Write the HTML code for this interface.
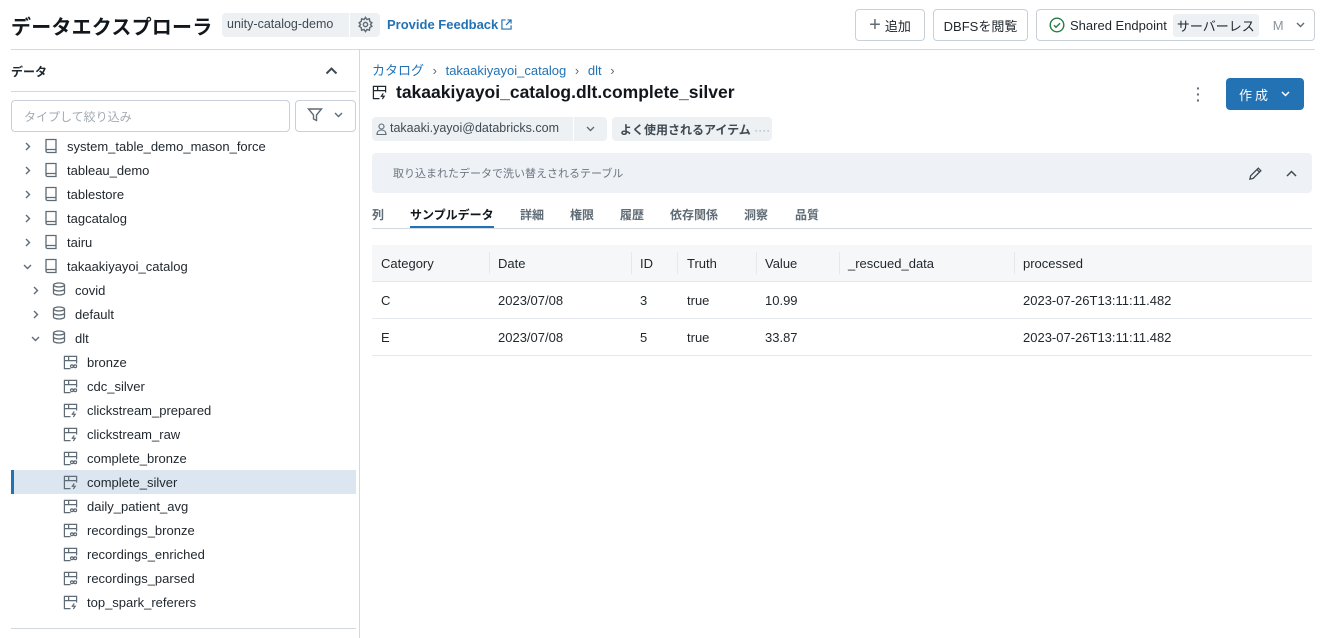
<!DOCTYPE html>
<html><head><meta charset="utf-8"><style>
*{box-sizing:border-box;margin:0;padding:0}
body{width:1322px;height:638px;overflow:hidden;background:#fff;font-family:"Liberation Sans","Noto Sans CJK JP",sans-serif;color:#1f272d;position:relative;font-size:13px}
.a{position:absolute;white-space:nowrap}
.btn{position:absolute;border:1px solid #c8d1d9;border-radius:4px;height:32px;top:9px;display:flex;align-items:center;font-size:13px;color:#1f272d}
.tab{position:absolute;top:206px;font-size:12px;font-weight:bold;color:#5f6b75}
.th{position:absolute;top:256px;font-size:13px;color:#1f272d}
.td{position:absolute;font-size:13px;color:#1f272d}
</style></head><body>
<div class="a" style="left:11px;top:11px;font-size:20px;font-weight:bold;color:#11171c;letter-spacing:0.2px">データエクスプローラ</div>
<div class="a" style="left:222px;top:13px;width:127px;height:24px;background:#eef1f4;border-radius:4px 0 0 4px;"></div>
<div class="a" style="left:227px;top:17px;font-size:12.5px;color:#3f4a53">unity-catalog-demo</div>
<div class="a" style="left:350px;top:13px;width:30px;height:24px;background:#eef1f4;border-radius:0 4px 4px 0"></div>
<svg class="a" style="left:357px;top:16px" width="17" height="17" viewBox="0 0 24 24" fill="none" stroke="#5f6b75" stroke-width="2"><circle cx="12" cy="12" r="3"/><path d="M12 2l2 3 3.5-1 .5 3.5 3 2-2 2.5 2 2.5-3 2-.5 3.5-3.5-1-2 3-2-3-3.5 1-.5-3.5-3-2 2-2.5-2-2.5 3-2 .5-3.5 3.5 1z"/></svg>
<div class="a" style="left:387px;top:17px;font-size:13px;font-weight:bold;color:#2272b4">Provide Feedback</div>
<svg class="a" style="left:501px;top:19px" width="11" height="11" viewBox="0 0 12 12" fill="none" stroke="#2272b4" stroke-width="1.3"><path d="M5 1H1v10h10V7M7 1h4v4M11 1L5.5 6.5"/></svg>

<div class="btn" style="left:855px;width:70px;justify-content:center"><span style="font-size:20px;color:#5f6b75;margin-right:4px;font-weight:300">+</span>追加</div>
<div class="btn" style="left:933px;width:95px;justify-content:center">DBFSを閲覧</div>
<div class="btn" style="left:1036px;width:279px;padding-left:12px">
<svg width="16" height="16" viewBox="0 0 16 16" fill="none" stroke="#277c43" stroke-width="1.4"><circle cx="8" cy="8" r="6.8"/><path d="M5 8.2l2 2 4-4"/></svg>
<span style="margin-left:5px">Shared Endpoint</span><span style="margin-left:6px;background:#eef1f4;padding:2px 4px;border-radius:3px">サーバーレス</span><span style="margin-left:14px;color:#8a949c">M</span>
<svg style="margin-left:12px" width="9" height="6" viewBox="0 0 9 6" fill="none" stroke="#5f6b75" stroke-width="1.4"><path d="M1 1l3.5 3.5L8 1"/></svg></div>

<div class="a" style="left:11px;top:49px;width:1304px;height:1px;background:#d1d9e1"></div>
<div class="a" style="left:359px;top:50px;width:1px;height:588px;background:#d1d9e1"></div>

<div class="a" style="left:11px;top:63px;font-size:12px;font-weight:bold">データ</div>
<svg class="a" style="left:325px;top:66px" width="13" height="9" viewBox="0 0 13 9" fill="none" stroke="#3f4a53" stroke-width="2"><path d="M1.5 7.5l5-5 5 5"/></svg>
<div class="a" style="left:11px;top:91px;width:345px;height:1px;background:#d1d9e1"></div>
<div class="a" style="left:11px;top:100px;width:279px;height:32px;border:1px solid #c8d1d9;border-radius:4px;"></div>
<div class="a" style="left:24px;top:108px;font-size:12px;color:#a2abb3">タイプして絞り込み</div>
<div class="a" style="left:295px;top:100px;width:61px;height:32px;border:1px solid #c8d1d9;border-radius:4px;"></div>
<svg class="a" style="left:307px;top:107px" width="16" height="16" viewBox="0 0 16 16" fill="none" stroke="#5f6b75" stroke-width="1.4"><path d="M1.5 2h13L9.5 8v5.5l-3-1.5V8z"/></svg>
<svg class="a" style="left:334px;top:112px" width="9" height="6" viewBox="0 0 9 6" fill="none" stroke="#5f6b75" stroke-width="1.4"><path d="M1 1l3.5 3.5L8 1"/></svg>

<div class="a" style="left:11px;top:470px;width:345px;height:24px;background:#dce6f0"></div>
<div class="a" style="left:11px;top:470px;width:3px;height:24px;background:#2272b4"></div>
<div class="a" style="left:11px;top:628px;width:345px;height:1px;background:#d1d9e1"></div>

<div id="tree"></div>

<div class="a" style="left:372px;top:60px;font-size:13px;color:#2272b4">カタログ <span style="color:#5f6b75;margin:0 5px">›</span> takaakiyayoi_catalog <span style="color:#5f6b75;margin:0 5px">›</span> dlt <span style="color:#5f6b75;margin:0 5px">›</span></div>
<svg class="a" style="left:372px;top:85px" width="15" height="15" viewBox="0 0 16 16" fill="none" stroke="#1f272d" stroke-width="1.3"><path d="M8 14.5H1.5v-13h13V8M1.5 6h13M6 1.5v4.5"/><path d="M12 9l-2 3h3l-2 3"/></svg>
<div class="a" style="left:396px;top:82px;font-size:17.5px;font-weight:bold;color:#11171c">takaakiyayoi_catalog.dlt.complete_silver</div>
<div class="a" style="left:1196px;top:85px;color:#5f6b75;font-size:14px;line-height:6px;font-weight:bold">·<br>·<br>·</div>
<div class="a" style="left:1226px;top:78px;width:78px;height:32px;background:#2272b4;border-radius:4px;color:#fff;font-size:13px;display:flex;align-items:center;padding-left:13px;letter-spacing:3px">作成
<svg style="margin-left:10px" width="9" height="6" viewBox="0 0 9 6" fill="none" stroke="#fff" stroke-width="1.5"><path d="M1 1l3.5 3.5L8 1"/></svg></div>

<div class="a" style="left:372px;top:117px;width:235px;height:24px;background:#eef1f4;border-radius:4px"></div>
<div class="a" style="left:573px;top:117px;width:1px;height:24px;background:#fff"></div>
<svg class="a" style="left:376px;top:123px" width="11" height="12" viewBox="0 0 11 12" fill="none" stroke="#5f6b75" stroke-width="1.1"><circle cx="5.5" cy="3.5" r="2.5"/><path d="M1 11.5c0-3 2-4.5 4.5-4.5s4.5 1.5 4.5 4.5z"/></svg>
<div class="a" style="left:390px;top:121px;font-size:12.5px;color:#3f4a53">takaaki.yayoi@databricks.com</div>
<svg class="a" style="left:586px;top:126px" width="9" height="6" viewBox="0 0 9 6" fill="none" stroke="#5f6b75" stroke-width="1.4"><path d="M1 1l3.5 3.5L8 1"/></svg>
<div class="a" style="left:612px;top:117px;width:160px;height:24px;background:#eef1f4;border-radius:4px"></div>
<div class="a" style="left:620px;top:121px;font-size:12px;font-weight:bold;color:#3f4a53">よく使用されるアイテム <span style="color:#a2abb3;font-weight:normal">····</span></div>

<div class="a" style="left:372px;top:153px;width:940px;height:40px;background:#eef2f6;border-radius:4px"></div>
<div class="a" style="left:393px;top:165px;font-size:11px;color:#6b7680">取り込まれたデータで洗い替えされるテーブル</div>
<svg class="a" style="left:1248px;top:166px" width="15" height="15" viewBox="0 0 16 16" fill="none" stroke="#3f4a53" stroke-width="1.4"><path d="M2 14l.8-3.5L11 2.3l2.7 2.7-8.2 8.2z M9.5 3.8l2.7 2.7"/></svg>
<svg class="a" style="left:1286px;top:170px" width="11" height="7" viewBox="0 0 11 7" fill="none" stroke="#3f4a53" stroke-width="1.5"><path d="M1 6l4.5-4.5L10 6"/></svg>

<div class="tab" style="left:372px">列</div>
<div class="tab" style="left:410px;color:#11171c">サンプルデータ</div>
<div class="a" style="left:410px;top:226px;width:84px;height:3px;background:#2272b4"></div>
<div class="tab" style="left:520px">詳細</div>
<div class="tab" style="left:570px">権限</div>
<div class="tab" style="left:620px">履歴</div>
<div class="tab" style="left:670px">依存関係</div>
<div class="tab" style="left:744px">洞察</div>
<div class="tab" style="left:795px">品質</div>
<div class="a" style="left:372px;top:228px;width:940px;height:1px;background:#d1d9e1"></div>

<div class="a" style="left:372px;top:245px;width:940px;height:36px;background:#f6f7f9"></div>
<div class="a" style="left:372px;top:281px;width:940px;height:1px;background:#e5e9ed"></div>
<div class="a" style="left:372px;top:318px;width:940px;height:1px;background:#e5e9ed"></div>
<div class="a" style="left:372px;top:355px;width:940px;height:1px;background:#e5e9ed"></div>
<div class="a" style="left:489px;top:252px;width:1px;height:22px;background:#e5e9ed"></div>
<div class="a" style="left:631px;top:252px;width:1px;height:22px;background:#e5e9ed"></div>
<div class="a" style="left:677px;top:252px;width:1px;height:22px;background:#e5e9ed"></div>
<div class="a" style="left:756px;top:252px;width:1px;height:22px;background:#e5e9ed"></div>
<div class="a" style="left:839px;top:252px;width:1px;height:22px;background:#e5e9ed"></div>
<div class="a" style="left:1014px;top:252px;width:1px;height:22px;background:#e5e9ed"></div>
<div class="th" style="left:381px">Category</div><div class="th" style="left:498px">Date</div><div class="th" style="left:640px">ID</div><div class="th" style="left:687px">Truth</div><div class="th" style="left:765px">Value</div><div class="th" style="left:848px">_rescued_data</div><div class="th" style="left:1023px">processed</div>
<div class="td" style="top:293px;left:381px">C</div><div class="td" style="top:293px;left:498px">2023/07/08</div><div class="td" style="top:293px;left:640px">3</div><div class="td" style="top:293px;left:687px">true</div><div class="td" style="top:293px;left:765px">10.99</div><div class="td" style="top:293px;left:1023px">2023-07-26T13:11:11.482</div>
<div class="td" style="top:330px;left:381px">E</div><div class="td" style="top:330px;left:498px">2023/07/08</div><div class="td" style="top:330px;left:640px">5</div><div class="td" style="top:330px;left:687px">true</div><div class="td" style="top:330px;left:765px">33.87</div><div class="td" style="top:330px;left:1023px">2023-07-26T13:11:11.482</div>

<script>
var book='<svg width="14" height="16" viewBox="0 0 14 16" fill="none" stroke="#5f6b75" stroke-width="1.3"><path d="M2 1.5h10v13H3.5A1.5 1.5 0 0 1 2 13zM2 13a1.5 1.5 0 0 1 1.5-1.5H12"/></svg>';
var db='<svg width="14" height="14" viewBox="0 0 14 14" fill="none" stroke="#5f6b75" stroke-width="1.3"><ellipse cx="7" cy="3" rx="5.5" ry="2"/><path d="M1.5 3v8c0 1.1 2.5 2 5.5 2s5.5-.9 5.5-2V3M1.5 7c0 1.1 2.5 2 5.5 2s5.5-.9 5.5-2"/></svg>';
var tb1='<svg width="15" height="15" viewBox="0 0 16 16" fill="none" stroke="#5f6b75" stroke-width="1.3"><path d="M8 14.5H1.5v-13h13V9M1.5 6h13M6 1.5v4.5"/><circle cx="9.5" cy="12" r="1.5"/><circle cx="13" cy="12" r="1.5"/></svg>';
var tb2='<svg width="15" height="15" viewBox="0 0 16 16" fill="none" stroke="#5f6b75" stroke-width="1.3"><path d="M8 14.5H1.5v-13h13V8M1.5 6h13M6 1.5v4.5"/><path d="M12 9l-2 3h3l-2 3"/></svg>';
var items=[[0,'system_table_demo_mason_force','>'],[0,'tableau_demo','>'],[0,'tablestore','>'],[0,'tagcatalog','>'],[0,'tairu','>'],[0,'takaakiyayoi_catalog','v'],[1,'covid','>'],[1,'default','>'],[1,'dlt','v'],[2,'bronze',1],[2,'cdc_silver',1],[2,'clickstream_prepared',2],[2,'clickstream_raw',2],[2,'complete_bronze',1],[2,'complete_silver',2],[2,'daily_patient_avg',1],[2,'recordings_bronze',1],[2,'recordings_enriched',1],[2,'recordings_parsed',1],[2,'top_spark_referers',2]];
var h='';items.forEach(function(it,i){var y=134+i*24;var lv=it[0];
if(lv<2){var cx=lv?31:23;h+='<svg class="a" style="left:'+cx+'px;top:'+(y+8)+'px" width="9" height="9" viewBox="0 0 9 9" fill="none" stroke="#5f6b75" stroke-width="1.4">'+(it[2]=='>'?'<path d="M3 1l3.5 3.5L3 8"/>':'<path d="M1 3l3.5 3.5L8 3"/>')+'</svg>';
h+='<div class="a" style="left:'+(lv?52:44)+'px;top:'+(y+4)+'px">'+(lv?db:book)+'</div><div class="a" style="left:'+(lv?75:67)+'px;top:'+(y+5)+'px;font-size:13px">'+it[1]+'</div>';}
else{h+='<div class="a" style="left:63px;top:'+(y+5)+'px">'+(it[2]==1?tb1:tb2)+'</div><div class="a" style="left:87px;top:'+(y+5)+'px;font-size:13px">'+it[1]+'</div>';}});
document.getElementById('tree').innerHTML=h;
</script>
</body></html>
